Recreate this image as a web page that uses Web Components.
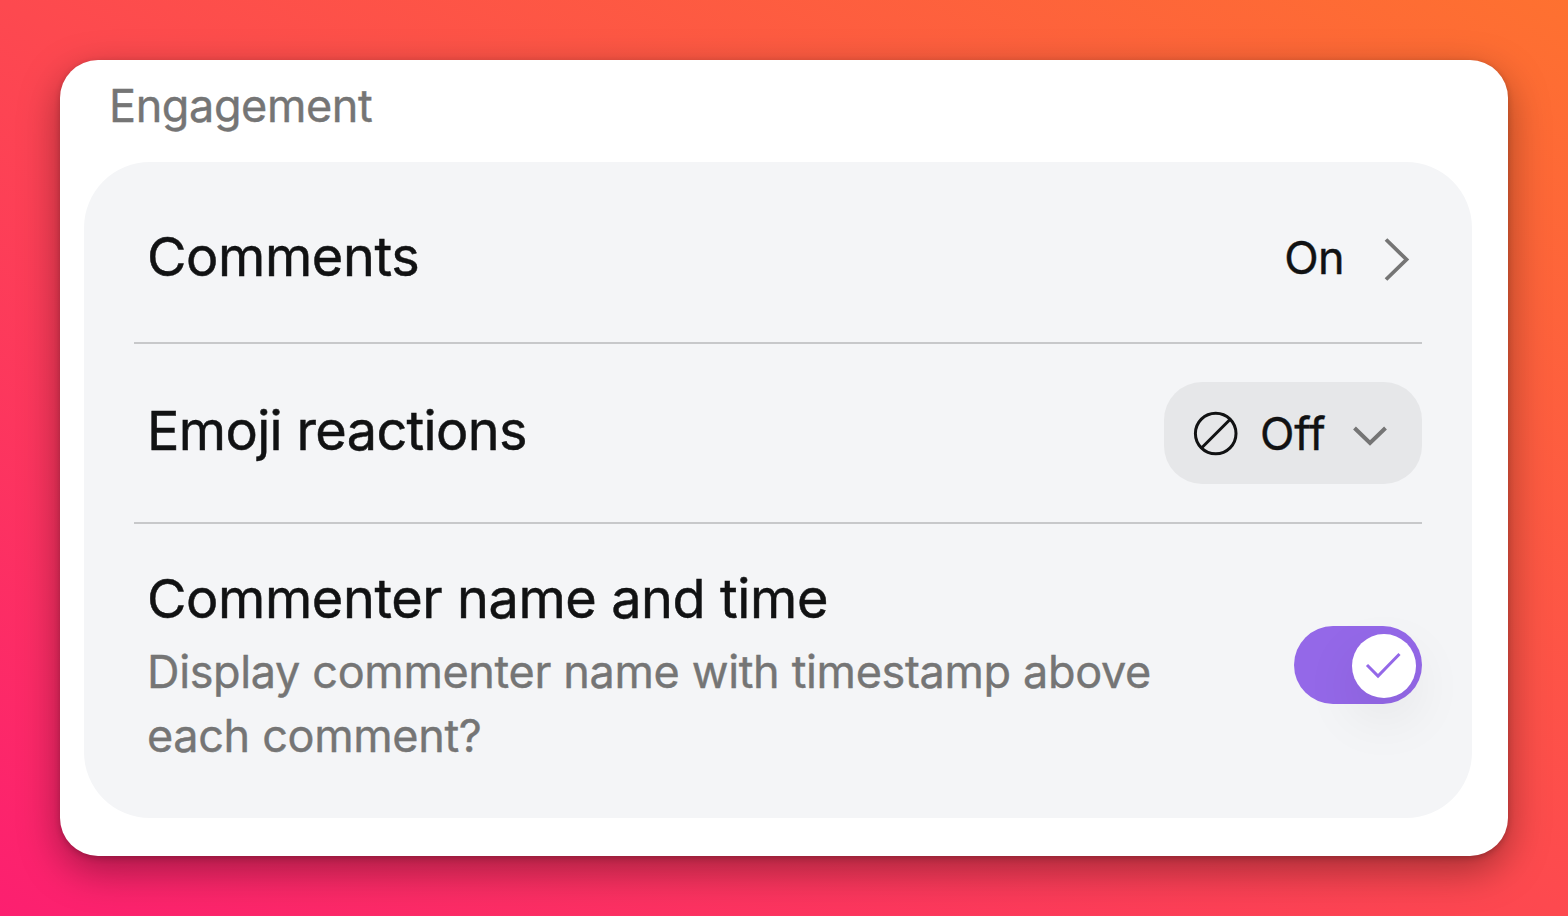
<!DOCTYPE html>
<html lang="en">
<head>
<meta charset="utf-8">
<title>Engagement settings</title>
<style>
  body {
    margin: 0;
    font-family: Inter, "Liberation Sans", sans-serif;
    color: #111213;
  }
</style>
</head>
<body>

<template id="settings-card-template">
  <style>
    :host {
      display: block;
      box-sizing: border-box;
      width: 100vw;
      height: 100vh;
      padding: 60px;
      overflow: hidden;
      background: linear-gradient(to top right, #fc1f70, #fd494f 50%, #fe7130);
    }

    .card {
      box-sizing: border-box;
      height: 100%;
      padding: 0 36px 38px 24px;
      display: flex;
      flex-direction: column;
      background: #fff;
      border-radius: 38px;
      box-shadow: 0 2px 6px rgba(0, 0, 0, 0.2), 0 14px 40px rgba(0, 0, 0, 0.36);
    }

    h2 {
      margin: 0;
      height: 102px;
      line-height: 92px;
      padding-left: 25px;
      font-size: 45px;
      font-weight: 400;
      letter-spacing: -0.4px;
      color: #757575;
      -webkit-text-stroke: 0.4px;
    }

    .panel {
      flex: 1;
      padding: 0 50px;
      background: #f4f5f7;
      border-radius: 66px;
    }
  </style>
  <div class="card">
    <h2><slot name="title"></slot></h2>
    <div class="panel"><slot></slot></div>
  </div>
</template>

<template id="setting-row-template">
  <style>
    :host {
      display: flex;
      box-sizing: border-box;
      height: var(--row-height, 180px);
      padding-left: 13px;
      align-items: center;
      justify-content: space-between;
      border-bottom: 2px solid #c7c8ca;
    }

    :host([last]) {
      border-bottom: none;
    }

    .text {
      padding: var(--text-padding, 0);
    }

    .label {
      font-size: 54px;
      line-height: 66px;
      letter-spacing: var(--label-spacing, -0.4px);
      white-space: nowrap;
      -webkit-text-stroke: 0.5px;
    }

    .hint {
      font-size: 45px;
      line-height: 64px;
      letter-spacing: -0.35px;
      color: #757575;
      -webkit-text-stroke: 0.4px;
    }

    .hint ::slotted(*) {
      display: block;
      padding-top: 8px;
    }
  </style>
  <div class="text">
    <div class="label"><slot name="label"></slot></div>
    <div class="hint"><slot name="hint"></slot></div>
  </div>
  <slot></slot>
</template>

<template id="link-value-template">
  <style>
    :host {
      display: flex;
      align-items: center;
      gap: 40px;
      padding: 11px 12px 0 0;
      font-size: 45px;
      line-height: 56px;
      letter-spacing: -0.6px;
      -webkit-text-stroke: 0.4px;
    }

    svg {
      display: block;
      margin-top: 3px;
    }
  </style>
  <slot></slot>
  <svg width="26" height="44" viewBox="0 0 26 44" fill="none" stroke="#757575" stroke-width="3.8">
    <path d="M2 2.500 L22.500 22.500 L2 42.500"/>
  </svg>
</template>

<template id="select-pill-template">
  <style>
    :host {
      display: flex;
      box-sizing: border-box;
      width: 258px;
      height: 102px;
      padding: 0 34px 0 29px;
      align-items: center;
      background: #e6e7e9;
      border-radius: 38px;
      font-size: 45px;
      line-height: 56px;
      letter-spacing: -0.1px;
      -webkit-text-stroke: 0.4px;
    }

    .value {
      flex: 1;
      padding: 1px 0 0 21px;
    }

    svg {
      display: block;
    }

    .chevron {
      margin-top: 6px;
    }
  </style>
  <svg width="46" height="46" viewBox="0 0 46 46" fill="none" stroke="#111213" stroke-width="3">
    <circle cx="22.700" cy="23.500" r="20.3"/>
    <path d="M37 9.5 L9 37.5"/>
  </svg>
  <span class="value"><slot></slot></span>
  <svg class="chevron" width="36" height="22" viewBox="0 0 36 22" fill="none" stroke="#757575" stroke-width="4">
    <path d="M2.500 3 L18 18 L33.500 3"/>
  </svg>
</template>

<template id="toggle-switch-template">
  <style>
    :host {
      display: flex;
      box-sizing: border-box;
      width: 128px;
      height: 78px;
      padding: 0 6px;
      align-items: center;
      background: #9468e8;
      border-radius: 39px;
    }

    :host([checked]) {
      justify-content: flex-end;
    }

    .knob {
      width: 64px;
      height: 64px;
      margin-top: 2px;
      border-radius: 50%;
      background: #fff;
      box-shadow: 0 20px 56px rgba(0, 0, 0, 0.08);
    }

    svg {
      display: block;
    }
  </style>
  <div class="knob">
    <svg width="64" height="64" viewBox="0 0 64 64" fill="none" stroke="#9468e8" stroke-width="3">
      <path d="M15 31 L26 42 L47.500 20"/>
    </svg>
  </div>
</template>

<settings-card>
  <span slot="title">Engagement</span>
  <setting-row style="--row-height: 182px; --text-padding: 10px 0 0">
    <span slot="label">Comments</span>
    <link-value>On</link-value>
  </setting-row>
  <setting-row style="--text-padding: 0 0 5px; --label-spacing: -0.65px">
    <span slot="label">Emoji reactions</span>
    <select-pill>Off</select-pill>
  </setting-row>
  <setting-row last style="--row-height: 282px; --text-padding: 3px 0 0">
    <span slot="label">Commenter name and time</span>
    <span slot="hint">Display commenter name with timestamp above<br>each comment?</span>
    <toggle-switch checked></toggle-switch>
  </setting-row>
</settings-card>

<script>
  (function () {
    // Every element is just its template cloned into an open shadow root
    function define(name) {
      const template = document.getElementById(name + "-template");

      customElements.define(
        name,
        class extends HTMLElement {
          constructor() {
            super();
            this.attachShadow({ mode: "open" });
            this.shadowRoot.appendChild(template.content.cloneNode(true));
          }
        }
      );
    }

    define("settings-card");
    define("setting-row");
    define("link-value");
    define("select-pill");
    define("toggle-switch");
  })();
</script>
</body>
</html>
